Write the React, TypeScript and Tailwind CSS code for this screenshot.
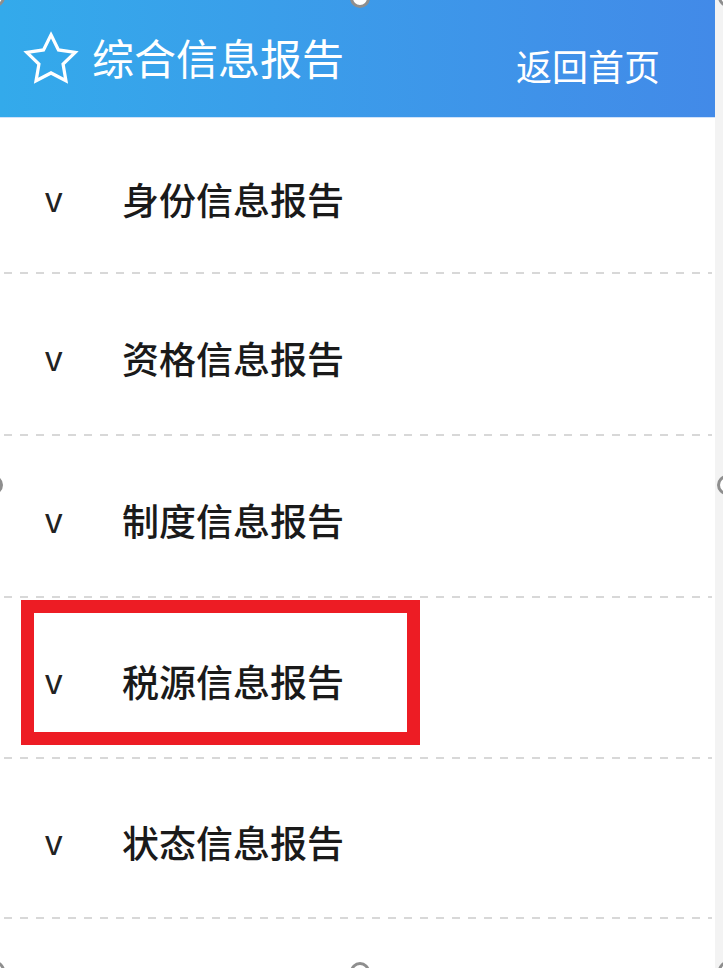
import React from 'react';

const items = [
  { label: '身份信息报告', h: 'h-[154px]' },
  { label: '资格信息报告', h: 'h-[160px]' },
  { label: '制度信息报告', h: 'h-[160px]' },
  { label: '税源信息报告', h: 'h-[159px]' },
  { label: '状态信息报告', h: 'h-[158px]' },
];

const handles = [
  'left-[-15px] top-[-13px]',
  'left-[350px] top-[-12px]',
  'left-[718px] top-[-13px]',
  'left-[-17px] top-[475px]',
  'left-[717px] top-[475px]',
  'left-[-15px] top-[961px]',
  'left-[350px] top-[962px]',
  'left-[718px] top-[961px]',
];

function StarIcon() {
  return (
    <svg width="58" height="58" viewBox="0 0 24 24" fill="none" stroke="white" strokeWidth="1.35" strokeLinejoin="miter">
      <polygon points="12,2 15.09,8.26 22,9.27 17,14.14 18.18,21.02 12,17.77 5.82,21.02 7,14.14 2,9.27 8.91,8.26" />
    </svg>
  );
}

function ReportRow({ label, h }: { label: string; h: string }) {
  return (
    <div>
      <div className={`flex items-center pt-2 pl-[45px] ${h}`}>
        <span className="w-[77px] text-[35px] leading-none text-[#222] font-['Liberation_Sans',sans-serif]">v</span>
        <span className="text-[37px] font-medium leading-none text-[#1a1a1a]">{label}</span>
      </div>
      <div className="ml-1 mr-[3px] h-[2px] bg-[repeating-linear-gradient(to_right,#d8d8d8_0_8px,transparent_8px_16px)]" />
    </div>
  );
}

export default function App() {
  return (
    <div className="relative h-[968px] w-[723px] overflow-hidden bg-white font-['Noto_Sans_CJK_SC','Noto_Sans',sans-serif]">
      <div className="flex h-full">
        <div className="w-[715px]">
          <header className="flex h-[118px] items-center border-b border-[#cfe2fa] bg-linear-to-r from-[#33aaeb] to-[#428ae8] pl-[22px] pr-[55px]">
            <StarIcon />
            <span className="ml-3 mb-[4px] text-[42px] leading-none text-white">综合信息报告</span>
            <span className="ml-auto mt-[13px] text-[36px] leading-none text-white">返回首页</span>
          </header>
          {items.map((it) => (
            <ReportRow key={it.label} label={it.label} h={it.h} />
          ))}
        </div>
        <div className="flex-1 bg-[#f3f3f3]" />
      </div>

      <div className="absolute left-[21px] top-[600px] h-[145px] w-[399px] border-[13px] border-[#ed1c24]" />

      {handles.map((pos) => (
        <div key={pos} className={`absolute h-5 w-5 rounded-full border-[3px] border-[#8e8e8e] bg-white ${pos}`} />
      ))}
    </div>
  );
}
